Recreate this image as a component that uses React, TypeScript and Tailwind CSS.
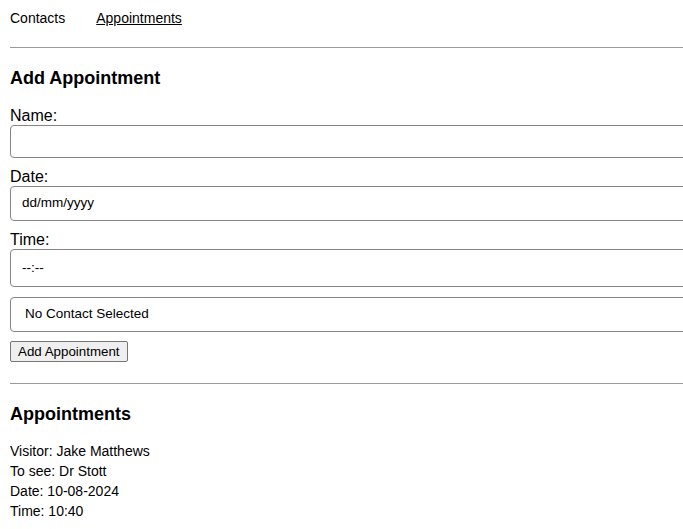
import React from 'react';

const font = { fontFamily: '"Liberation Sans", Arial, sans-serif' };

const Field = ({ h, children, pl = 'pl-[11px]' }: { h: string; children?: React.ReactNode; pl?: string }) => (
  <div className={`${h} w-[720px] rounded-[4px] border border-[#858585] bg-white flex items-center ${pl} text-[13.5px] text-black`}>
    {children}
  </div>
);

const App = () => {
  return (
    <div className="w-[683px] h-[529px] overflow-hidden bg-white text-black pl-[10px]" style={font}>
      <nav className="pt-2 h-[28px] flex text-[14px] leading-5">
        <span>Contacts</span>
        <span className="ml-[31px] underline">Appointments</span>
      </nav>
      <div className="mt-[19px] h-px bg-[#9a9a9a] w-[720px]" />

      <h2 className="mt-[18px] text-[18px] leading-6 font-bold">Add Appointment</h2>

      <div className="mt-[17px] text-[16px] leading-[18px]">Name:</div>
      <Field h="h-[33px]" />

      <div className="mt-[9px] text-[16px] leading-[19px]">Date:</div>
      <Field h="h-[35px]">dd/mm/yyyy</Field>

      <div className="mt-[9px] text-[16px] leading-[19px]">Time:</div>
      <Field h="h-[38px]">--:--</Field>

      <div className="mt-[10px]">
        <Field h="h-[35px]" pl="pl-[14px]">No Contact Selected</Field>
      </div>

      <button className="mt-[9px] h-[21px] px-[7px] text-[13.33px] leading-none bg-[#efefef] border border-[#767676] rounded-[2px]">
        Add Appointment
      </button>

      <div className="mt-[20px] h-px bg-[#9a9a9a] w-[720px]" />

      <h2 className="mt-[18px] text-[18px] leading-6 font-bold">Appointments</h2>

      <div className="mt-[15px] text-[14px] leading-5">
        <div>Visitor: Jake Matthews</div>
        <div>To see: Dr Stott</div>
        <div>Date: 10-08-2024</div>
        <div>Time: 10:40</div>
      </div>
    </div>
  );
};

export default App;
